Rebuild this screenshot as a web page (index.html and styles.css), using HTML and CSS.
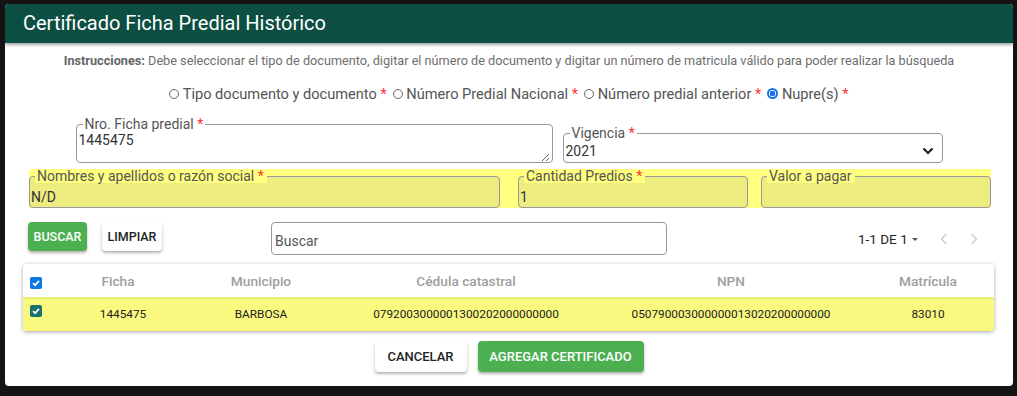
FILE: index.html
```html
<!DOCTYPE html>
<html lang="es">
<head>
  <meta charset="UTF-8" />
  <title>Certificado Ficha Predial Histórico</title>
  <link rel="stylesheet" href="styles.css">
</head>
<body>
<div class="dialog">
  <div class="dialog-header">Certificado Ficha Predial Histórico</div>

  <div class="dialog-body">
    <p class="instrucciones"><b>Instrucciones:</b> Debe seleccionar el tipo de documento, digitar el número de documento y digitar un número de matricula válido para poder realizar la búsqueda</p>

    <div class="radios">
      <label><span class="radio"></span> Tipo documento y documento <i>*</i></label>
      <label><span class="radio"></span> Número Predial Nacional <i>*</i></label>
      <label><span class="radio"></span> Número predial anterior <i>*</i></label>
      <label><span class="radio on"></span> Nupre(s) <i>*</i></label>
    </div>

    <div class="row-top">
      <fieldset class="field ficha">
        <legend>Nro. Ficha predial <i>*</i></legend>
        <textarea>1445475</textarea>
      </fieldset>
      <fieldset class="field vigencia">
        <legend>Vigencia <i>*</i></legend>
        <div class="select">
          <span>2021</span>
          <svg width="12" height="8" viewBox="0 0 12 8"><path d="M1.5 1.5 L6 6 L10.5 1.5" fill="none" stroke="#222" stroke-width="2.2"/></svg>
        </div>
      </fieldset>
    </div>

    <div class="row-yellow">
      <fieldset class="field ro nombres">
        <legend>Nombres y apellidos o razón social <i>*</i></legend>
        <div class="val">N/D</div>
      </fieldset>
      <fieldset class="field ro cantidad">
        <legend>Cantidad Predios <i>*</i></legend>
        <div class="val">1</div>
      </fieldset>
      <fieldset class="field ro valor">
        <legend>Valor a pagar</legend>
        <div class="val"></div>
      </fieldset>
    </div>

    <div class="toolbar">
      <button class="btn green buscar-btn">BUSCAR</button>
      <button class="btn white limpiar-btn">LIMPIAR</button>
      <input class="buscar" type="text" placeholder="Buscar">
      <div class="paginas">1-1 DE 1 <span class="caret"></span></div>
      <div class="nav">
        <svg width="8" height="12" viewBox="0 0 8 12"><path d="M6.5 1 L1.5 6 L6.5 11" fill="none" stroke="#ccc" stroke-width="1.4"/></svg>
        <svg width="8" height="12" viewBox="0 0 8 12"><path d="M1.5 1 L6.5 6 L1.5 11" fill="none" stroke="#ccc" stroke-width="1.4"/></svg>
      </div>
    </div>

    <div class="tabla">
      <div class="tr th">
        <div><span class="check blue"></span></div>
        <div>Ficha</div>
        <div>Municipio</div>
        <div>Cédula catastral</div>
        <div>NPN</div>
        <div>Matrícula</div>
      </div>
      <div class="tr td">
        <div><span class="check teal"></span></div>
        <div class="ficha-val">1445475</div>
        <div>BARBOSA</div>
        <div>0792003000001300202000000000</div>
        <div>050790003000000013020200000000</div>
        <div>83010</div>
      </div>
    </div>

    <div class="acciones">
      <button class="btn white big">CANCELAR</button>
      <button class="btn green big">AGREGAR CERTIFICADO</button>
    </div>
  </div>
</div>
</body>
</html>
```

FILE: styles.css
```css
body {
  margin: 0;
  background-color: #141414;
  font-family: Roboto, "Liberation Sans", sans-serif;
  color: #333;
}
.dialog {
  margin: 4px 0 0 5px;
  width: 1008px;
  height: 382px;
  background-color: white;
  border-radius: 4px;
  overflow: hidden;
}
.dialog-header {
  height: 39px;
  line-height: 38px;
  background-color: #0c4e41;
  color: white;
  font-size: 20px;
  padding-left: 18px;
  box-shadow: 0 2px 3px rgba(0,0,0,0.35);
  position: relative;
}
.dialog-body {
  padding: 0 18px;
}
.instrucciones {
  margin: 10px 0 0;
  text-align: center;
  font-size: 12.7px;
  color: #6e6e6e;
}
.instrucciones b {
  color: #666;
}
.radios {
  display: flex;
  justify-content: center;
  gap: 6px;
  margin-top: 17px;
  font-size: 14.6px;
  color: #555;
}
.radios i, legend i {
  font-style: normal;
  color: #f33;
}
.radio {
  display: inline-block;
  width: 10px;
  height: 10px;
  border: 1px solid #666;
  border-radius: 50%;
  box-sizing: border-box;
}
.radio.on {
  width: 11px;
  height: 11px;
  border: 2px solid #1a73e8;
  background: radial-gradient(circle, #1a73e8 55%, white 60%);
}

/* campos */
.field {
  margin: 0;
  padding: 0 2px 2px;
  border: 1px solid #999;
  border-radius: 4px;
  box-sizing: border-box;
}
.field legend {
  font-size: 14px;
  color: #555;
  padding: 0 2px;
  margin-left: 4px;
  line-height: 14px;
}
.row-top {
  display: flex;
  justify-content: center;
  align-items: flex-end;
  gap: 10px;
  margin-top: 14px;
}
.ficha {
  width: 477px;
  height: 46px;
}
.ficha textarea {
  display: block;
  width: 100%;
  height: 30px;
  border: none;
  padding: 0;
  margin-top: 1px;
  font-family: Roboto, "Liberation Sans", sans-serif;
  font-size: 14px;
  color: #333;
  outline: none;
  resize: vertical;
}
.vigencia {
  width: 380px;
  height: 37px;
}
.select {
  display: flex;
  justify-content: space-between;
  align-items: center;
  font-size: 14px;
  padding: 3px 6px 0 0;
}
.row-yellow {
  display: flex;
  margin: 6px 0 0 6px;
  width: 962px;
  height: 39px;
  background-color: #ffff80;
}
.ro {
  height: 39px;
  background-color: #ecec80;
  padding: 0 1px;
}
.ro legend {
  background-color: #ffff80;
  padding: 0 3px 0 2px;
  margin-left: 4px;
}
.ro .val {
  font-size: 14px;
  line-height: 20px;
  padding-top: 4px;
  color: #333;
}
.nombres { width: 471px; }
.cantidad { width: 230px; margin-left: 18px; }
.valor { width: 230px; margin-left: 13px; }

/* barra */
.toolbar {
  display: flex;
  align-items: flex-start;
  margin: 14px 0 0 5px;
  height: 33px;
}
.btn {
  font-family: Roboto, "Liberation Sans", sans-serif;
  font-weight: 500;
  font-size: 12.5px;
  border: none;
  border-radius: 4px;
  box-shadow: 0 2px 3px rgba(0,0,0,0.3);
  cursor: pointer;
}
.btn.green {
  background-color: #4caf50;
  color: white;
}
.btn.white {
  background-color: white;
  color: #222;
}
.toolbar .btn {
  height: 29px;
  padding: 0;
}
.buscar-btn { width: 59px; }
.limpiar-btn {
  margin-left: 15px;
  width: 60px;
}
.buscar {
  margin-left: 109px;
  width: 396px;
  height: 33px;
  box-sizing: border-box;
  border: 1px solid #999;
  border-radius: 4px;
  padding: 4px 3px 0;
  font-family: Roboto, "Liberation Sans", sans-serif;
  font-size: 14px;
}
.buscar::placeholder {
  color: #555;
}
.paginas {
  margin: 9px 0 0 191px;
  font-size: 13.5px;
  color: #222;
  display: flex;
  align-items: center;
  gap: 4px;
}
.caret {
  border-left: 3px solid transparent;
  border-right: 3px solid transparent;
  border-top: 3px solid #555;
}
.nav {
  display: flex;
  gap: 22px;
  margin: 11px 0 0 22px;
}

/* tabla */
.tabla {
  margin: 9px 0 0 0;
  width: 971px;
  border-radius: 4px;
  box-shadow: 0 1px 4px rgba(0,0,0,0.35);
  overflow: hidden;
}
.tr {
  display: grid;
  grid-template-columns: 40px 110px 176px 234px 296px 98px 1fr;
  align-items: center;
  text-align: center;
}
.th {
  height: 33px;
  background: white;
  color: #9e9e9e;
  font-weight: 500;
  font-size: 13.7px;
}
.td {
  height: 34px;
  background: linear-gradient(#ebeb78, #fafa80 4px, #f8f880);
  color: #222;
  font-size: 11.8px;
}
.ficha-val {
  padding-left: 10px;
}
.check {
  display: block;
  width: 12px;
  height: 12px;
  border-radius: 2px;
  margin-left: 7px;
  background-repeat: no-repeat;
  background-position: center;
  background-image: url("data:image/svg+xml;utf8,<svg xmlns='http://www.w3.org/2000/svg' width='10' height='10' viewBox='0 0 10 10'><path d='M2 5.2 L4.1 7.2 L8 2.8' fill='none' stroke='white' stroke-width='1.8'/></svg>");
}
.th .check { margin-top: 5px; }
.td .check { margin-top: -6px; }
.check.blue { background-color: #0b78e6; }
.check.teal { background-color: #17726e; }

.acciones {
  display: flex;
  justify-content: center;
  gap: 11px;
  margin-top: 10px;
}
.btn.big {
  height: 31px;
  font-size: 13px;
}
.acciones .btn.white { width: 92px; }
.acciones .btn.green { width: 166px; }
```
